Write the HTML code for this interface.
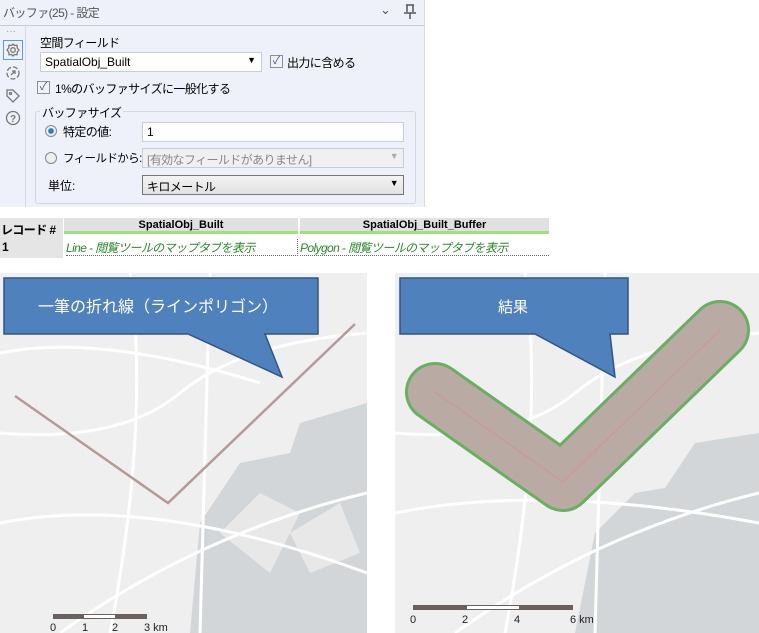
<!DOCTYPE html>
<html><head><meta charset="utf-8"><style>
*{margin:0;padding:0;box-sizing:border-box}
body{width:759px;height:633px;background:#fff;position:relative;overflow:hidden;font-family:"Liberation Sans","Noto Sans CJK JP",sans-serif;font-size:12px;color:#000}
.a{position:absolute}
#panel{left:0;top:0;width:425px;height:207px;background:#eef1f9;border-right:1px solid #d6dbe6}
.inp{background:#fff;border:1px solid #c9cdd6;height:20px;padding:2px 4px}
.cb{width:13px;height:13px;border:1px solid #8a8f99;background:#f2f2f2;font-size:11px;line-height:11px;text-align:center;color:#3b5ba0}
.rad{width:12px;height:12px;border-radius:50%;border:1px solid #888;background:#eee}
.n{letter-spacing:-0.6px}
</style></head><body>
<div id="panel" class="a">
 <div class="a n" style="left:3px;top:4px;color:#555;font-size:12px">バッファ(25) - 設定</div>
 <div class="a" style="left:380px;top:2px;color:#555;font-size:13px">⌄</div>
 <svg class="a" style="left:403px;top:4px" width="14" height="16"><path d="M3 1H11M4 1V8M10 1V8M1 9H13M7 9V15" stroke="#555" stroke-width="1.5" fill="none"/></svg>
 <div class="a" style="left:0;top:25px;width:425px;height:1px;background:#c8ccd4"></div>
 <div class="a" style="left:25px;top:26px;width:1px;height:181px;background:#d6dae3"></div>
 <div class="a" style="left:6px;top:26px;color:#999;font-size:10px">···</div>
 <div class="a" style="left:3px;top:40px;width:20px;height:20px;border:1px solid #5b9bd5"></div>
 <svg class="a" style="left:5px;top:42px" width="16" height="16" fill="none" stroke="#777" stroke-width="1.3"><circle cx="8" cy="8" r="2.3"/><path d="M8 2L9.5 3.5L12 3.2L12.3 6L14 8L12.3 10L12 12.8L9.5 12.5L8 14L6.5 12.5L4 12.8L3.7 10L2 8L3.7 6L4 3.2L6.5 3.5Z"/></svg>
 <svg class="a" style="left:5px;top:65px" width="16" height="16" fill="none" stroke="#777" stroke-width="1.3"><circle cx="8" cy="8" r="6" stroke-dasharray="5 2"/><path d="M6 10L10 6M7 6H10V9"/></svg>
 <svg class="a" style="left:5px;top:88px" width="16" height="16" fill="none" stroke="#777" stroke-width="1.3"><path d="M2 2H8L14 8L8 14L2 8Z"/><circle cx="5.5" cy="5.5" r="1"/></svg>
 <svg class="a" style="left:5px;top:110px" width="16" height="16" fill="none" stroke="#777" stroke-width="1.3"><circle cx="8" cy="8" r="6.5"/><text x="5" y="12" font-size="10" fill="#777" stroke="none" font-family="Liberation Sans" font-weight="bold">?</text></svg>
 <div class="a n" style="left:40px;top:34px">空間フィールド</div>
 <div class="a inp" style="left:40px;top:52px;width:222px;font-size:12px">SpatialObj_Built<span style="position:absolute;right:5px;top:2px;font-size:9px">▼</span></div>
 <div class="a cb" style="left:270px;top:55px">✓</div>
 <div class="a n" style="left:287px;top:54px">出力に含める</div>
 <div class="a cb" style="left:37px;top:81px">✓</div>
 <div class="a n" style="left:55px;top:80px">1%のバッファサイズに一般化する</div>
 <div class="a" style="left:35px;top:111px;width:381px;height:93px;border:1px solid #d3d7df;border-radius:3px"></div>
 <div class="a n" style="left:40px;top:104px;background:#eef1f9;padding:0 2px">バッファサイズ</div>
 <div class="a rad" style="left:45px;top:125px;background:radial-gradient(circle,#2a7fc9 35%,#eee 45%)"></div>
 <div class="a n" style="left:63px;top:123px">特定の値:</div>
 <div class="a inp" style="left:142px;top:122px;width:262px">1</div>
 <div class="a rad" style="left:45px;top:152px"></div>
 <div class="a n" style="left:63px;top:150px;font-size:11.5px">フィールドから:</div>
 <div class="a inp n" style="left:142px;top:148px;width:262px;background:#f0f0f0;color:#888">[有効なフィールドがありません]<span style="position:absolute;right:5px;top:2px;font-size:9px;color:#aaa">▼</span></div>
 <div class="a" style="left:48px;top:177px">単位:</div>
 <div class="a inp n" style="left:142px;top:175px;width:262px;background:linear-gradient(#f4f4f4,#e2e2e2);border-color:#777">キロメートル<span style="position:absolute;right:5px;top:2px;font-size:9px">▼</span></div>
</div>
<div class="a" style="left:0;top:218px;width:63px;height:40px;background:#e5e5e5"></div>
<div class="a n" style="left:1px;top:221px;font-weight:bold">レコード #</div>
<div class="a" style="left:2px;top:240px;font-weight:bold">1</div>
<div class="a" style="left:64px;top:218px;width:234px;height:16px;background:#e1e1e1;border-bottom:3px solid #9ee07a;text-align:center;font-weight:bold;line-height:14px;font-size:11px">SpatialObj_Built</div>
<div class="a" style="left:300px;top:218px;width:249px;height:16px;background:#e1e1e1;border-bottom:3px solid #9ee07a;text-align:center;font-weight:bold;line-height:14px;font-size:11px">SpatialObj_Built_Buffer</div>
<div class="a n" style="left:66px;top:239px;width:232px;height:17px;border-bottom:1px dotted #666;border-right:1px dotted #666;color:#2a8a2a;font-style:italic">Line - 閲覧ツールのマップタブを表示</div>
<div class="a n" style="left:300px;top:239px;width:249px;height:17px;border-bottom:1px dotted #666;color:#2a8a2a;font-style:italic">Polygon - 閲覧ツールのマップタブを表示</div>

<svg class="a" style="left:0;top:273px" width="367" height="360">
 <rect width="367" height="360" fill="#efefef"/>
 <path d="M200 250L240 190L290 180L300 150L367 130V360H190Z" fill="#d2d6d9"/>
 <path d="M220 260L260 220L300 240L270 300Z M290 260L340 230L360 280L310 300Z" fill="#e8e8e8"/>
 <g stroke="#fff" stroke-width="3" fill="none"><path d="M0 160Q120 170 180 120T367 60"/><path d="M0 250Q150 220 367 300"/><path d="M130 0Q150 150 110 360"/><path d="M210 0L200 360"/><path d="M0 80Q100 60 260 110"/><path d="M60 360Q200 260 367 220"/></g>
 <path d="M15 123L168 230L355 51" stroke="#b59a98" stroke-width="2.5" fill="none"/>
 <path d="M4 5H318V61H265L282 104L188 61H4Z" fill="#4f81bd" stroke="#2f558a" stroke-width="1.5"/>
 <text x="158" y="39" fill="#fff" font-size="16" text-anchor="middle" font-family="Liberation Sans,Noto Sans CJK JP,sans-serif">一筆の折れ線（ラインポリゴン）</text>
 <rect x="53" y="341" width="94" height="5" fill="#6b6060"/><rect x="84" y="342" width="31" height="3" fill="#fff"/>
 <g font-size="11" fill="#222" font-family="Liberation Sans"><text x="50" y="358">0</text><text x="82" y="358">1</text><text x="112" y="358">2</text><text x="144" y="358">3 km</text></g>
</svg>
<svg class="a" style="left:395px;top:273px" width="364" height="360">
 <rect width="364" height="360" fill="#efefef"/>
 <path d="M200 260L240 220L270 215L300 170L364 160V360H180Z" fill="#d2d6d9"/>
 <g stroke="#fff" stroke-width="3" fill="none"><path d="M0 160Q120 170 180 120T364 60"/><path d="M0 240Q150 210 364 250"/><path d="M130 0Q150 150 110 360"/><path d="M210 0L200 360"/><path d="M60 360Q200 260 364 220"/></g>
 <path d="M40 119L168 209L325 57" stroke="#66b060" stroke-width="60" stroke-linecap="round" stroke-linejoin="round" fill="none"/>
 <path d="M40 119L168 209L325 57" stroke="#b9aba3" stroke-width="54" stroke-linecap="round" stroke-linejoin="round" fill="none"/>
 <path d="M40 119L168 209L325 57" stroke="#c89a9a" stroke-width="1.5" fill="none"/>
 <path d="M5 5H233V61H215L220 104L140 61H5Z" fill="#4f81bd" stroke="#2f558a" stroke-width="1.5"/>
 <text x="118" y="39" fill="#fff" font-size="15" text-anchor="middle" font-family="Liberation Sans,Noto Sans CJK JP,sans-serif">結果</text>
 <rect x="18" y="332" width="160" height="5" fill="#6b6060"/><rect x="72" y="333" width="52" height="3" fill="#fff"/>
 <g font-size="11" fill="#222" font-family="Liberation Sans"><text x="15" y="350">0</text><text x="67" y="350">2</text><text x="119" y="350">4</text><text x="175" y="350">6 km</text></g>
</svg>
</body></html>
